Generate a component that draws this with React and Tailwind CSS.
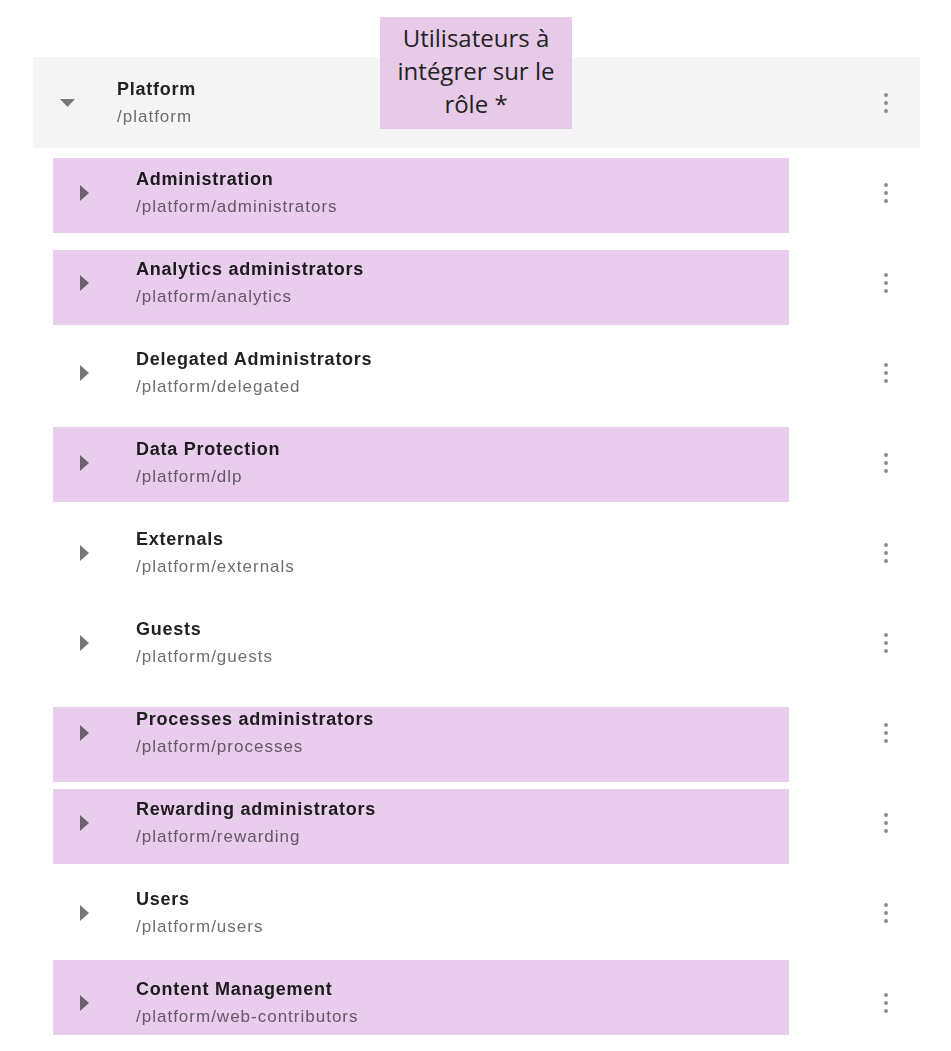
const groups = [
  { name: "Administration", path: "/platform/administrators", mark: "top-[10px]" },
  { name: "Analytics administrators", path: "/platform/analytics", mark: "top-[12px]" },
  { name: "Delegated Administrators", path: "/platform/delegated" },
  { name: "Data Protection", path: "/platform/dlp", mark: "top-[9px]" },
  { name: "Externals", path: "/platform/externals" },
  { name: "Guests", path: "/platform/guests" },
  { name: "Processes administrators", path: "/platform/processes", mark: "top-[19px]" },
  { name: "Rewarding administrators", path: "/platform/rewarding", mark: "top-[11px]" },
  { name: "Users", path: "/platform/users" },
  { name: "Content Management", path: "/platform/web-contributors", mark: "top-[2px]" },
];

function Kebab() {
  return (
    <div className="ml-auto mr-[32px] flex flex-col gap-[4px]">
      <span className="w-[4px] h-[4px] rounded-full bg-[#8d8d8d]" />
      <span className="w-[4px] h-[4px] rounded-full bg-[#8d8d8d]" />
      <span className="w-[4px] h-[4px] rounded-full bg-[#8d8d8d]" />
    </div>
  );
}

function Label({ name, path }) {
  return (
    <div className="flex flex-col">
      <span className="text-[18px] leading-[27px] font-bold tracking-[0.75px] text-[#222222]">
        {name}
      </span>
      <span className="text-[17px] leading-[27px] tracking-[1px] text-[#6e6e6e]">
        {path}
      </span>
    </div>
  );
}

export default function App() {
  return (
    <div
      className="relative w-[951px] h-[1051px] bg-white pt-[57px] pl-[33px] overflow-hidden"
      style={{ fontFamily: '"Liberation Sans", Arial, sans-serif' }}
    >
      <div className="w-[887px]">
        {/* parent group */}
        <div className="flex items-center h-[91px] bg-[#f5f5f5] pl-[27px]">
          <svg width="15" height="8" viewBox="0 0 15 8">
            <path d="M0 0 L15 0 L7.5 8 Z" fill="#777777" />
          </svg>
          <div className="ml-[42px]">
            <Label name="Platform" path="/platform" />
          </div>
          <Kebab />
        </div>

        {/* children */}
        {groups.map((g) => (
          <div key={g.path} className="relative flex items-center h-[90px] pl-[47px]">
            <svg width="9" height="16" viewBox="0 0 9 16">
              <path d="M0 0 L9 8 L0 16 Z" fill="#777777" />
            </svg>
            <div className="ml-[47px]">
              <Label name={g.name} path={g.path} />
            </div>
            <Kebab />
            {g.mark && (
              <div
                className={`absolute left-[20px] w-[736px] h-[75px] bg-[#e9cdec] mix-blend-multiply ${g.mark}`}
              />
            )}
          </div>
        ))}
      </div>

      {/* annotation */}
      <div
        className="absolute left-[380px] top-[17px] w-[192px] h-[112px] pb-[5px] bg-[#e7cae8] flex items-center justify-center text-center text-[24px] leading-[33px] text-[#222222]"
        style={{ fontFamily: '"Open Sans", sans-serif' }}
      >
        Utilisateurs à
        <br />
        intégrer sur le
        <br />
        rôle *
      </div>
    </div>
  );
}
